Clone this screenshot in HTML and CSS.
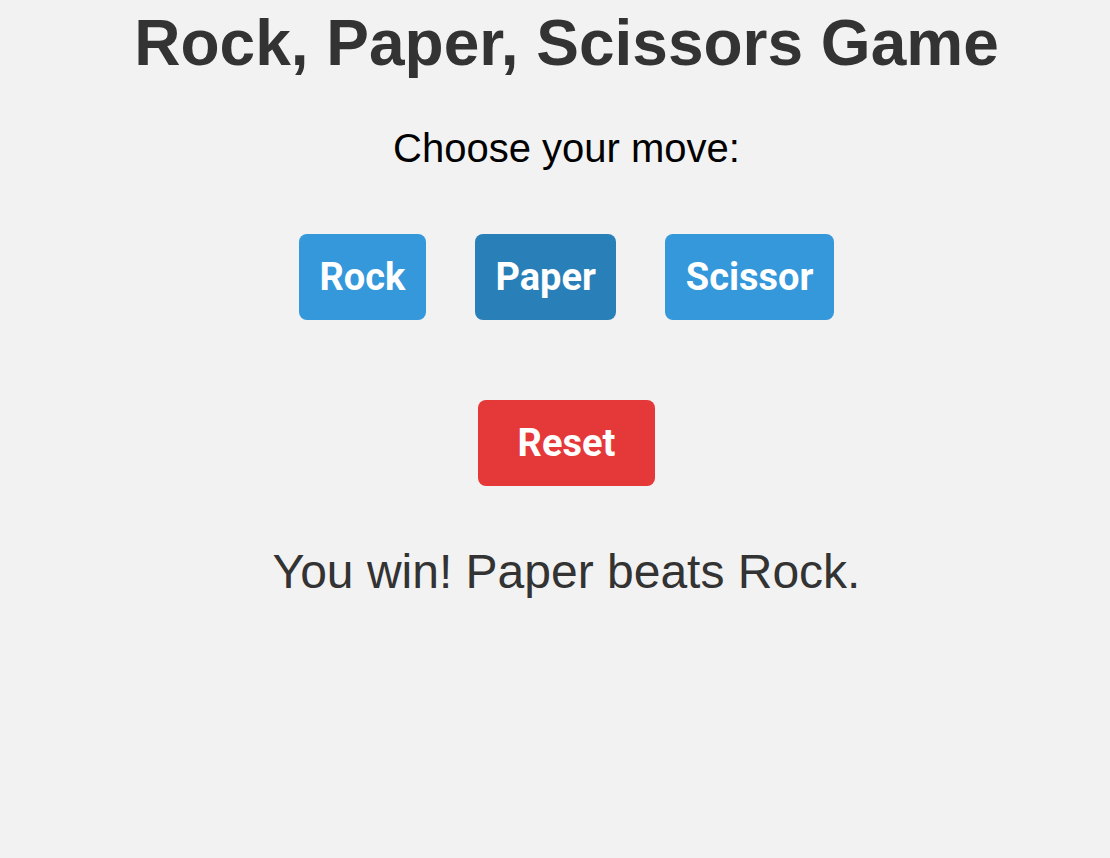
FILE: index.html
```html
<!DOCTYPE html>
<html>
<head>
<meta charset="utf-8">
<link rel="stylesheet" href="styles.css">
</head>
<body>
<div class="page">
  <h1 class="title">Rock, Paper, Scissors Game</h1>
  <p class="prompt">Choose your move:</p>
  <div class="moves">
    <button class="btn move">Rock</button>
    <button class="btn move active">Paper</button>
    <button class="btn move">Scissor</button>
  </div>
  <button class="btn reset">Reset</button>
  <p class="result">You win! Paper beats Rock.</p>
</div>
</body>
</html>
```
FILE: styles.css
```css
html, body {
  margin: 0;
  padding: 0;
  background: #f2f2f2;
}
.page {
  display: flex;
  flex-direction: column;
  align-items: center;
  padding-left: 23px;
  font-family: "Liberation Sans", Arial, sans-serif;
}
.title {
  margin: 7px 0 0;
  font-size: 64px;
  font-weight: bold;
  color: #333;
  line-height: 1.15;
}
.prompt {
  margin: 44px 0 0;
  font-size: 40px;
  color: #000;
  line-height: 1.15;
}
.moves {
  display: flex;
  gap: 49px;
  margin-top: 63px;
}
.btn {
  font-family: Roboto, "Liberation Sans", sans-serif;
  font-weight: bold;
  font-size: 38px;
  color: #fff;
  border: none;
  border-radius: 8px;
  height: 86px;
  padding: 0 20.5px;
  cursor: pointer;
}
.move {
  background: #3498db;
}
.move.active {
  background: #2980b9;
}
.reset {
  margin-top: 80px;
  background: #e53939;
  padding: 0 40px;
}
.result {
  margin: 58px 0 0;
  font-size: 48px;
  color: #333;
  line-height: 1.15;
}
```
